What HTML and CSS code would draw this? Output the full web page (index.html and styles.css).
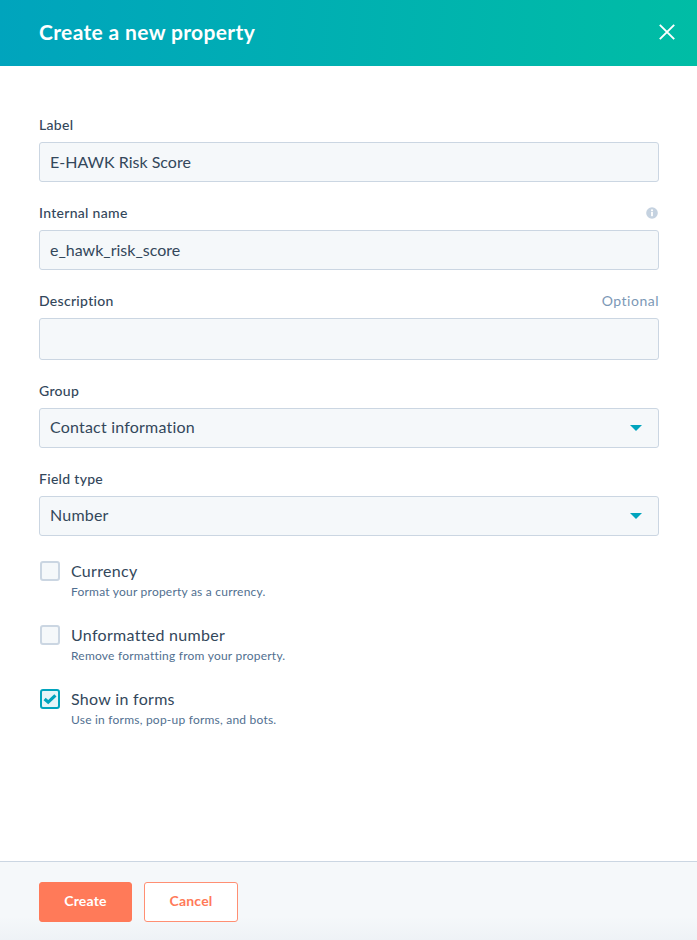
FILE: index.html
```html
<!DOCTYPE html>
<html lang="en">
<head>
<meta charset="utf-8">
<title>Create a new property</title>
<link rel="stylesheet" href="styles.css">
</head>
<body>
<div class="panel">
  <header class="header">
    <h1 class="title">Create a new property</h1>
    <svg class="close" viewBox="0 0 16 16" width="16" height="16" aria-label="Close"><path d="M0.8 0.8L15.2 15.2M15.2 0.8L0.8 15.2"/></svg>
  </header>
  <main class="form">
    <div class="field">
      <div class="label-row"><span class="label">Label</span></div>
      <div class="input">E-HAWK Risk Score</div>
    </div>
    <div class="field">
      <div class="label-row"><span class="label">Internal name</span>
        <svg class="info" viewBox="0 0 12 12" width="12" height="12"><circle class="info-disc" cx="6" cy="6" r="5.8"/><rect class="info-mark" x="5.1" y="5" width="1.8" height="4.2"/><circle class="info-mark" cx="6" cy="3.3" r="1.1"/></svg>
      </div>
      <div class="input">e_hawk_risk_score</div>
    </div>
    <div class="field">
      <div class="label-row"><span class="label">Description</span><span class="optional">Optional</span></div>
      <div class="input input-tall"></div>
    </div>
    <div class="field">
      <div class="label-row"><span class="label">Group</span></div>
      <div class="input select">Contact information<span class="caret"></span></div>
    </div>
    <div class="field">
      <div class="label-row"><span class="label">Field type</span></div>
      <div class="input select">Number<span class="caret"></span></div>
    </div>
    <div class="checks">
      <div class="check">
        <span class="box"></span>
        <div><div class="check-title">Currency</div><div class="check-desc">Format your property as a currency.</div></div>
      </div>
      <div class="check">
        <span class="box"></span>
        <div><div class="check-title">Unformatted number</div><div class="check-desc">Remove formatting from your property.</div></div>
      </div>
      <div class="check">
        <span class="box box-on"><svg viewBox="0 0 14 12" width="14" height="12"><path d="M1.6 6L5.2 9.2L12.4 2.4"/></svg></span>
        <div><div class="check-title">Show in forms</div><div class="check-desc">Use in forms, pop-up forms, and bots.</div></div>
      </div>
    </div>
  </main>
  <footer class="footer">
    <button class="btn btn-primary">Create</button>
    <button class="btn btn-secondary">Cancel</button>
  </footer>
</div>
</body>
</html>
```
FILE: styles.css
```css
* { box-sizing: border-box; }
html, body { margin: 0; padding: 0; }
body { font-family: Lato, "Open Sans", sans-serif; color: #33475b; background: #fff; }
.panel { width: 697px; height: 940px; display: flex; flex-direction: column; overflow: hidden; }
.header {
  height: 66px; flex: none; display: flex; align-items: center; justify-content: space-between;
  padding: 0 22px 2px 39px;
  background: linear-gradient(93deg, #00a4bd 0%, #00bda5 100%);
  color: #fff;
}
.title { margin: 0; font-size: 21px; font-weight: 700; line-height: 28px; letter-spacing: 0.35px; }
.close path { stroke: #fff; stroke-width: 1.9; fill: none; }
.form { flex: 1; padding: 50px 38px 0 39px; }
.field { margin-bottom: 22px; }
.label-row { height: 20px; margin-bottom: 6px; padding-bottom: 2px; display: flex; align-items: center; justify-content: space-between; }
.label { font-size: 14px; font-weight: 500; line-height: 18px; letter-spacing: 0.3px; color: #33475b; }
.optional { font-size: 14px; line-height: 18px; color: #7c98b6; letter-spacing: 0.5px; }
.info { margin-right: 1px; }
.info-disc { fill: #c5d2e0; }
.info-mark { fill: #fff; }
.input {
  height: 40px; display: flex; align-items: center; padding: 0 10px 2px 10px;
  background: #f5f8fa; border: 1px solid #cbd6e2; border-radius: 3px;
  font-size: 16px; color: #33475b; letter-spacing: 0;
}
.input-tall { height: 42px; }
.select { justify-content: space-between; padding-right: 16px; padding-bottom: 4px; letter-spacing: 0.2px; }
.caret { width: 0; height: 0; margin-top: 3px; border-left: 6px solid transparent; border-right: 6px solid transparent; border-top: 6px solid #00a4bd; }
.checks { display: flex; flex-direction: column; gap: 16px; padding-top: 2px; }
.check { display: flex; gap: 11px; padding-left: 1px; height: 48px; }
.box { flex: none; width: 20px; height: 20px; margin-top: 1px; border: 2px solid #cbd6e2; border-radius: 3px; background: #f5f8fa; display: flex; align-items: center; justify-content: center; }
.box-on { border-color: #00a4bd; background: #e5f5f8; }
.box-on path { fill: none; stroke: #00a4bd; stroke-width: 3.2; }
.check-title { font-size: 16px; line-height: 22px; color: #33475b; letter-spacing: 0.3px; }
.check-desc { font-size: 12px; line-height: 18px; margin-top: 1px; color: #516f90; letter-spacing: 0.22px; }
.footer {
  height: 79px; flex: none; display: flex; gap: 12px; align-items: flex-start; padding: 20px 0 0 39px;
  border-top: 1px solid #cbd6e2;
  background: linear-gradient(180deg, #f5f8fa 0%, #f5f8fa 70%, #eef2f6 100%);
}
.btn { height: 40px; font-family: inherit; font-size: 14px; font-weight: 700; letter-spacing: 0.2px; border-radius: 3px; padding: 0 0 3px; }
.btn-primary { width: 93px; background: #ff7a59; border: 1px solid #ff7a59; color: #fff; }
.btn-secondary { width: 94px; background: #fff; border: 1px solid #ff8f73; color: #ff7a59; }
```
